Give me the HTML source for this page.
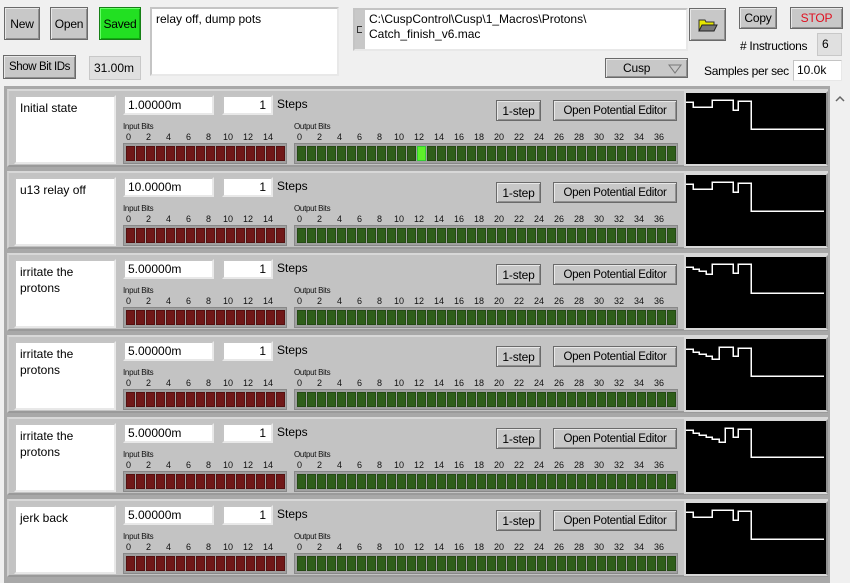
<!DOCTYPE html>
<html><head><meta charset="utf-8"><style>
*{box-sizing:border-box;margin:0;padding:0}
body{width:850px;height:583px;background:#f0f0f0;font-family:"Liberation Sans",sans-serif;font-size:12px;color:#000;position:relative;overflow:hidden;white-space:nowrap}
.a{position:absolute}
.btn{position:absolute;background:#c8c8c8;border:1px solid #6a6a6a;box-shadow:inset 1px 1px 0 #e8e8e8,inset -1px -1px 0 #909090;display:flex;align-items:center;justify-content:center;font-size:12px;letter-spacing:-0.2px}
.fld{position:absolute;background:#fff;border:2px solid #c4c4c4;border-right-color:#e8e8e8;border-bottom-color:#e8e8e8;font-size:12px;padding-left:3px}
.ind{position:absolute;background:#e0e0e0;border:1px solid #c8c8c8;font-size:12px;padding-left:4px}
#list{position:absolute;left:4px;top:86px;width:826px;height:497px;background:#a8a8a8}
.row{position:absolute;left:3px;width:821px;height:78px;background:#c3c3c3;border-top:2px solid #d8d8d8;border-left:2px solid #d0d0d0;border-bottom:2px solid #9a9a9a}
.sm{position:absolute;font-size:8px;color:#111;letter-spacing:-0.3px}
.dg{position:absolute;font-size:9px;color:#111}
.bits{position:absolute;height:21px;background:#a0a0a0;border:1px solid #888;padding:2px 1px}
.c{position:absolute;top:2px;width:9px;height:15px}
</style></head><body>
<div class="btn" style="left:4px;top:7px;width:36px;height:33px">New</div>
<div class="btn" style="left:50px;top:7px;width:38px;height:33px">Open</div>
<div class="btn" style="left:99px;top:7px;width:42px;height:33px;background:#22e022;border-color:#158015;box-shadow:inset 1px 1px 0 #6f6,inset -1px -1px 0 #1a1">Saved</div>
<div class="fld" style="left:150px;top:7px;width:189px;height:69px;padding:3px 4px">relay off, dump pots</div>
<div class="btn" style="left:3px;top:55px;width:73px;height:24px;font-size:11.5px;letter-spacing:-0.4px">Show Bit IDs</div>
<div class="ind" style="left:89px;top:56px;width:52px;height:24px;line-height:22px">31.00m</div>
<div class="fld" style="left:353px;top:8px;width:335px;height:43px;padding:2px 0 0 14px;line-height:15px;font-size:12px;background:#fff">C:\CuspControl\Cusp\1_Macros\Protons\<br>Catch_finish_v6.mac</div>
<div class="a" style="left:355px;top:10px;width:10px;height:39px;background:#c8c8c8"></div>
<div class="a" style="left:357px;top:26px;width:5px;height:7px;border:1px solid #333;border-right:none"></div>
<div class="btn" style="left:689px;top:8px;width:37px;height:33px">
<svg width="20" height="14" viewBox="0 0 20 14"><path d="M1 2h6l1 2h8v9H1z" fill="#e8e800" stroke="#333"/><path d="M4 7h15l-3 6H1z" fill="#777" stroke="#222"/></svg></div>
<div class="btn" style="left:739px;top:7px;width:38px;height:22px">Copy</div>
<div class="btn" style="left:790px;top:7px;width:53px;height:22px;color:#e01020">STOP</div>
<div class="a" style="left:740px;top:39px;font-size:12px;letter-spacing:-0.3px">#&nbsp;Instructions</div>
<div class="ind" style="left:817px;top:33px;width:25px;height:23px;line-height:21px">6</div>
<div class="btn" style="left:605px;top:58px;width:83px;height:20px;justify-content:flex-start;padding-left:17px">Cusp<svg class="a" style="left:62px;top:5px" width="14" height="10"><path d="M1 1h12L7 9z" fill="none" stroke="#777"/></svg></div>
<div class="a" style="left:704px;top:64px;font-size:12px;letter-spacing:-0.3px">Samples per sec</div>
<div class="fld" style="left:793px;top:60px;width:49px;height:21px;border-width:1px;line-height:19px">10.0k</div>
<div class="a" style="left:830px;top:86px;width:20px;height:497px;background:#f0f0f0"></div>
<svg class="a" style="left:835px;top:95px" width="10" height="8"><path d="M1 6l4-4 4 4" fill="none" stroke="#666" stroke-width="1.5"/></svg>
<div id="list"></div>
<script>
var names=["Initial state","u13 relay off","irritate the<br>protons","irritate the<br>protons","irritate the<br>protons","jerk back"];
var times=["1.00000m","10.0000m","5.00000m","5.00000m","5.00000m","5.00000m"];
var waves=[
"0,9 7,9 7,14 26,14 26,7 47,7 47,17 52,17 52,8 65,8 65,36 138,36",
"0,9 7,9 7,14 26,14 26,7 47,7 47,17 52,17 52,8 65,8 65,36 138,36",
"0,10 7,10 7,12 13,12 13,14 20,14 20,17 26,17 26,7 47,7 47,16 52,16 52,7 65,7 65,36 138,36",
"0,10 7,10 7,13 13,13 13,15 20,15 20,17 26,17 26,20 33,20 33,8 47,8 47,17 52,17 52,9 65,9 65,37 138,37",
"0,9 7,9 7,12 13,12 13,14 20,14 20,16 26,16 26,18 33,18 33,21 39,21 39,7 47,7 47,16 52,16 52,8 65,8 65,36 138,36",
"0,9 7,9 7,14 26,14 26,7 47,7 47,17 52,17 52,8 65,8 65,36 138,36"];
var h="";
for(var r=0;r<6;r++){
 var t=3+r*82;
 h+='<div class="row" style="top:'+t+'px">';
 h+='<div class="fld" style="left:5px;top:4px;width:102px;height:69px;padding:3px 4px;line-height:16px">'+names[r]+'</div>';
 h+='<div class="fld" style="left:114px;top:4px;width:91px;height:20px;line-height:16px">'+times[r]+'</div>';
 h+='<div class="fld" style="left:213px;top:4px;width:51px;height:20px;line-height:16px;text-align:right;padding-right:5px">1</div>';
 h+='<div class="a" style="left:268px;top:6px;font-size:12px">Steps</div>';
 h+='<div class="btn" style="left:487px;top:9px;width:45px;height:21px">1-step</div>';
 h+='<div class="btn" style="left:544px;top:9px;width:124px;height:21px;font-size:11.5px;letter-spacing:-0.3px">Open Potential Editor</div>';
 h+='<div class="sm" style="left:114px;top:31px">Input Bits</div>';
 h+='<div class="sm" style="left:285px;top:31px">Output Bits</div>';
 for(var i=0;i<16;i+=2)h+='<div class="dg" style="left:'+(117+i*10-(i>=10?3:0))+'px;top:41px">'+i+'</div>';
 for(var i=0;i<38;i+=2)h+='<div class="dg" style="left:'+(288+i*10-(i>=10?3:0))+'px;top:41px">'+i+'</div>';
 h+='<div class="bits" style="left:114px;top:52px;width:164px">';
 for(var i=0;i<16;i++)h+='<div class="c" style="left:'+(2+i*10)+'px;background:#701818;box-shadow:inset 0 0 0 1px #541010"></div>';
 h+='</div><div class="bits" style="left:285px;top:52px;width:384px">';
 for(var i=0;i<38;i++){var on=(r==0&&i==12);h+='<div class="c" style="left:'+(2+i*10)+'px;background:'+(on?'#5ef02a':'#2f5e1a')+';box-shadow:inset 0 0 0 1px '+(on?'#3c3':'#244a14')+'"></div>';}
 h+='</div>';
 h+='<div class="a" style="left:675px;top:0px;width:144px;height:75px;background:#000;border:2px solid #d8d8d8;border-right-color:#909090"><svg width="140" height="72" style="position:absolute;left:0;top:0"><polyline points="'+waves[r]+'" fill="none" stroke="#fff" stroke-width="1.5" shape-rendering="crispEdges"/></svg></div>';
 h+='</div>';
}
document.getElementById("list").innerHTML=h;
</script>
</body></html>
